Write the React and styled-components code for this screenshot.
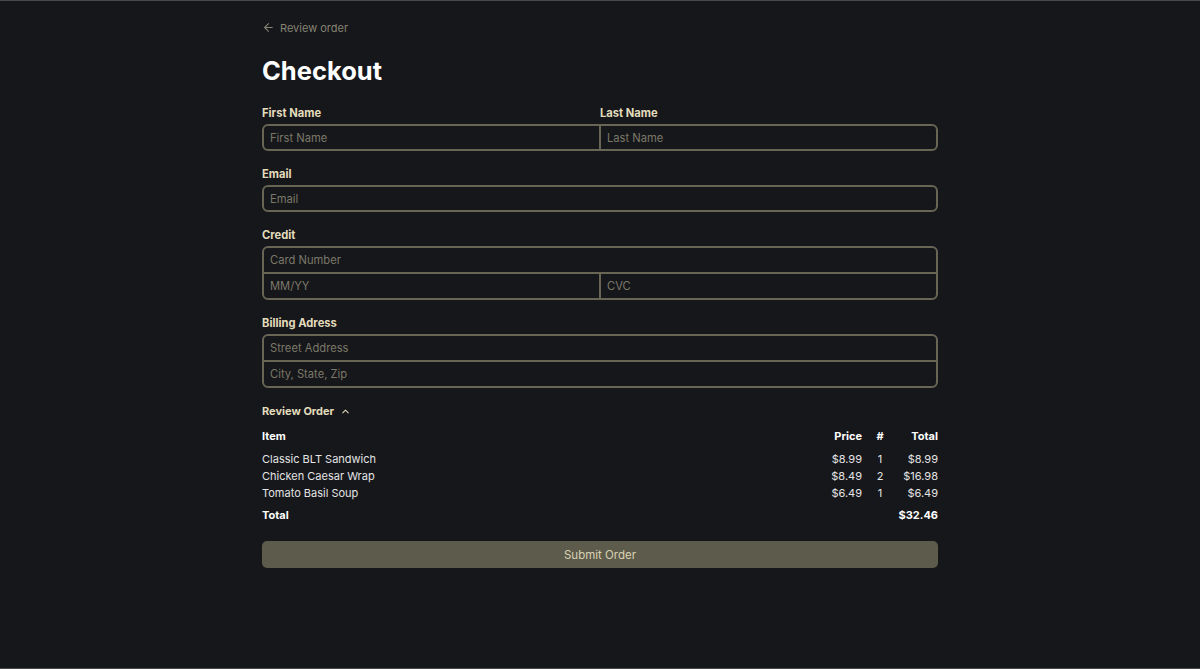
import styled, { createGlobalStyle } from 'styled-components';
import { ArrowLeft, ChevronUp } from 'lucide-react';

const GlobalStyle = createGlobalStyle`
  * { box-sizing: border-box; }
  html, body { margin: 0; padding: 0; background: #16171b; }
  body {
    font-family: Inter, "Noto Sans", sans-serif;
    min-height: 100vh;
    border-top: 1px solid #4a4a4a;
    border-bottom: 1px solid #4a4a4a;
  }
`;

const Page = styled.main`
  width: 676px;
  margin: 0 auto;
  padding-top: 17px;
  padding-bottom: 40px;
`;

const BackLink = styled.a`
  display: inline-flex;
  align-items: center;
  gap: 5px;
  font-size: 11px;
  line-height: 14px;
  color: #858273;
  text-decoration: none;
  cursor: pointer;
`;

const Title = styled.h1`
  margin: 17px 0 18px;
  font-size: 25.5px;
  line-height: 32px;
  font-weight: 700;
  color: #ffffff;
`;

const Section = styled.section`
  margin-bottom: 15px;
`;

const Row = styled.div`
  display: flex;
`;

const Col = styled.div`
  flex: 1;
  min-width: 0;
`;

const Label = styled.label`
  display: block;
  font-size: 11.2px;
  line-height: 16px;
  font-weight: 700;
  color: #e3dcbc;
  margin-bottom: 3px;
`;

const Input = styled.input`
  display: block;
  width: 100%;
  height: 27px;
  padding: 0 6px;
  background: transparent;
  border: 2px solid #686555;
  border-top-width: ${(p) => (p.$joinTop ? 1 : 2)}px;
  border-bottom-width: ${(p) => (p.$joinBottom ? 1 : 2)}px;
  border-left-width: ${(p) => (p.$joinLeft ? 1 : 2)}px;
  border-right-width: ${(p) => (p.$joinRight ? 1 : 2)}px;
  border-radius: ${(p) => p.$radius || '0'};
  color: #e8e8e8;
  font-family: inherit;
  font-size: 11.2px;
  outline: none;

  &::placeholder {
    color: #7b7868;
  }
`;

const ReviewToggle = styled.button`
  display: flex;
  align-items: center;
  gap: 6px;
  height: 16px;
  padding: 0;
  margin: 0 0 9px;
  background: none;
  border: none;
  font-family: inherit;
  font-size: 11px;
  line-height: 16px;
  font-weight: 700;
  color: #e3dcbc;
  cursor: pointer;
`;

const Table = styled.div`
  display: grid;
  grid-template-columns: 1fr 60px 36px 40px;
  font-size: 11px;
  color: #ececec;
`;

const Cell = styled.div`
  line-height: 17px;
  text-align: ${(p) => p.$align || 'left'};
  font-weight: ${(p) => (p.$bold ? 700 : 400)};
  color: ${(p) => (p.$bold ? '#ffffff' : '#e4e4e4')};
  white-space: nowrap;
  padding-bottom: ${(p) => p.$pad || 0}px;
  padding-top: ${(p) => p.$top || 0}px;
`;

const SubmitButton = styled.button`
  display: block;
  width: 100%;
  height: 27px;
  margin-top: 17px;
  border: none;
  border-radius: 5px;
  background: #5d5b4b;
  color: #d8d2b3;
  font-family: inherit;
  font-size: 11.5px;
  cursor: pointer;
`;

const items = [
  { name: 'Classic BLT Sandwich', price: '$8.99', qty: 1, total: '$8.99' },
  { name: 'Chicken Caesar Wrap', price: '$8.49', qty: 2, total: '$16.98' },
  { name: 'Tomato Basil Soup', price: '$6.49', qty: 1, total: '$6.49' },
];

export default function App() {
  return (
    <>
      <GlobalStyle />
      <Page>
        <BackLink>
          <ArrowLeft size={13} strokeWidth={2} />
          Review order
        </BackLink>
        <Title>Checkout</Title>

        <Section>
          <Row>
            <Col>
              <Label>First Name</Label>
              <Input placeholder="First Name" $radius="6px 0 0 6px" $joinRight />
            </Col>
            <Col>
              <Label>Last Name</Label>
              <Input placeholder="Last Name" $radius="0 6px 6px 0" $joinLeft />
            </Col>
          </Row>
        </Section>

        <Section>
          <Label>Email</Label>
          <Input placeholder="Email" $radius="6px" />
        </Section>

        <Section>
          <Label>Credit</Label>
          <Input placeholder="Card Number" $radius="6px 6px 0 0" $joinBottom />
          <Row>
            <Col>
              <Input placeholder="MM/YY" $radius="0 0 0 6px" $joinTop $joinRight />
            </Col>
            <Col>
              <Input placeholder="CVC" $radius="0 0 6px 0" $joinTop $joinLeft />
            </Col>
          </Row>
        </Section>

        <Section>
          <Label>Billing Adress</Label>
          <Input placeholder="Street Address" $radius="6px 6px 0 0" $joinBottom />
          <Input placeholder="City, State, Zip" $radius="0 0 6px 6px" $joinTop />
        </Section>

        <ReviewToggle>
          Review Order
          <ChevronUp size={11} strokeWidth={2.2} />
        </ReviewToggle>

        <Table>
          <Cell $bold $pad={6}>Item</Cell>
          <Cell $bold $pad={6} $align="right">Price</Cell>
          <Cell $bold $pad={6} $align="center">#</Cell>
          <Cell $bold $pad={6} $align="right">Total</Cell>
          {items.map((it) => (
            <>
              <Cell key={it.name}>{it.name}</Cell>
              <Cell $align="right">{it.price}</Cell>
              <Cell $align="center">{it.qty}</Cell>
              <Cell $align="right">{it.total}</Cell>
            </>
          ))}
          <Cell $bold $top={5}>Total</Cell>
          <Cell $top={5} />
          <Cell $top={5} />
          <Cell $bold $top={5} $align="right">$32.46</Cell>
        </Table>

        <SubmitButton>Submit Order</SubmitButton>
      </Page>
    </>
  );
}
